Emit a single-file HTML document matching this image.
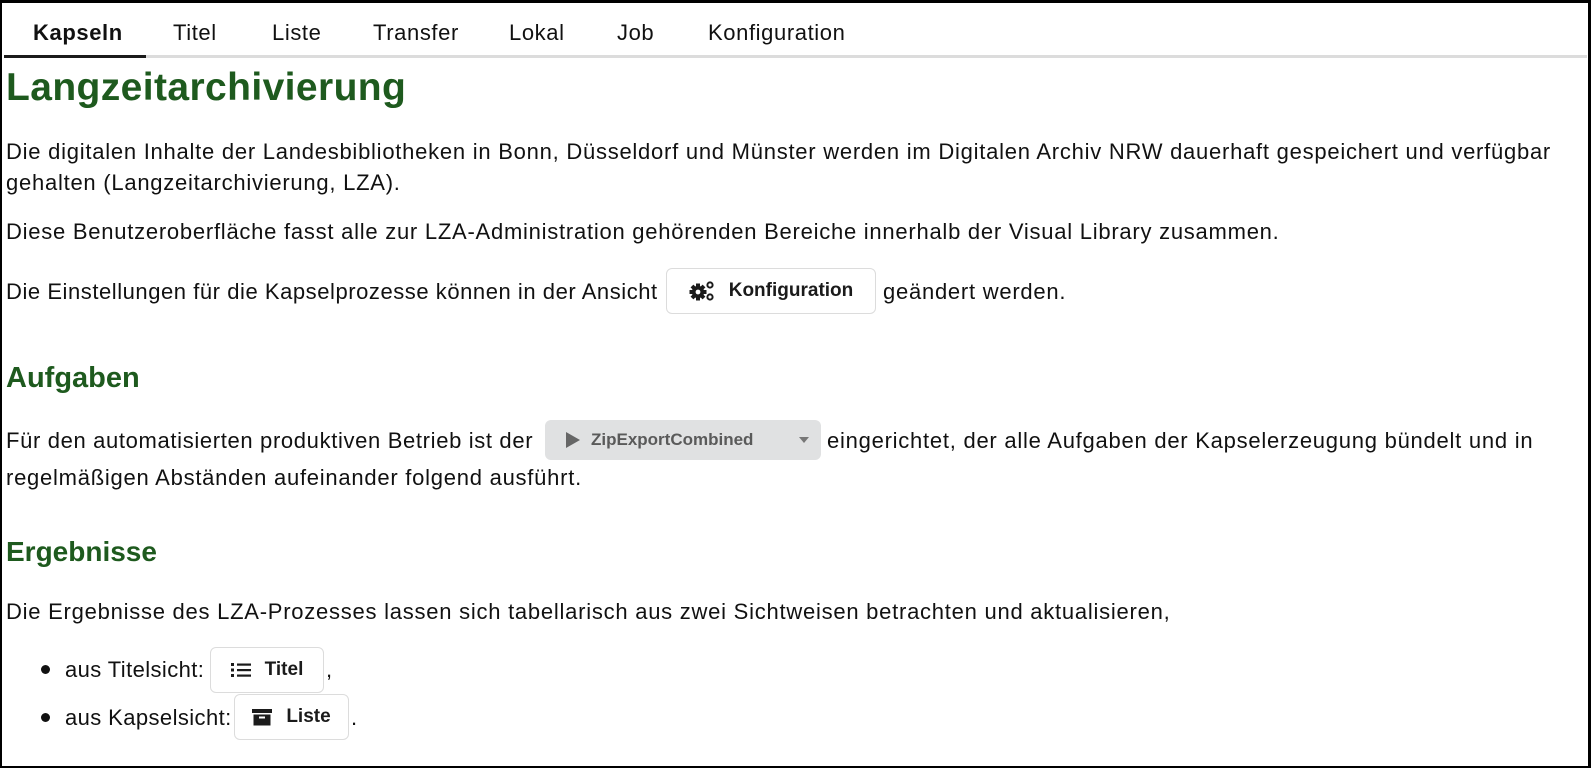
<!DOCTYPE html>
<html><head><meta charset="utf-8"><style>
*{margin:0;padding:0;box-sizing:border-box}
body{width:1591px;height:770px;overflow:hidden;background:#fff;font-family:"Liberation Sans",Arial,sans-serif;color:#111;position:relative}
.frame{position:absolute;left:0;top:0;width:1591px;height:768px;border:2px solid #000;border-top-width:3px;border-right-width:3px}
.a{position:absolute;white-space:nowrap}
.t{font-size:22px;line-height:24px;letter-spacing:0.75px}
.tab{position:absolute;top:20px;font-size:22px;letter-spacing:0.6px}
.ul{position:absolute;left:4px;top:55px;width:1583px;height:3px;background:#dcdcdc}
.ul2{position:absolute;left:4px;top:55px;width:142px;height:3px;background:#1b1b1b}
h1,h2{position:absolute;color:#1e5a1e;font-weight:bold;white-space:nowrap}
h1{font-size:39px;left:6px;top:66px;letter-spacing:0.4px}
h2{font-size:28px;left:6px}
.btn{position:absolute;border:1px solid #dcdcdc;border-radius:6px;background:#fff;font-weight:bold;font-size:19px;display:flex;align-items:center;justify-content:center;gap:14px;color:#1b1b1b}
.grey{background:#e0e1e2;border:none;color:#5a5a5a;justify-content:flex-start;padding-left:18px;gap:10px}
.dot{position:absolute;width:9px;height:9px;border-radius:50%;background:#111}
</style></head><body>
<div class="frame"></div>
<div class="tab" style="left:33px;font-weight:bold">Kapseln</div>
<div class="tab" style="left:173px">Titel</div>
<div class="tab" style="left:272px">Liste</div>
<div class="tab" style="left:373px">Transfer</div>
<div class="tab" style="left:509px">Lokal</div>
<div class="tab" style="left:617px">Job</div>
<div class="tab" style="left:708px">Konfiguration</div>
<div class="ul"></div><div class="ul2"></div>
<h1>Langzeitarchivierung</h1>
<div class="a t" style="left:6px;top:140px">Die digitalen Inhalte der Landesbibliotheken in Bonn, Düsseldorf und Münster werden im Digitalen Archiv NRW dauerhaft gespeichert und verfügbar</div>
<div class="a t" style="left:6px;top:171px">gehalten (Langzeitarchivierung, LZA).</div>
<div class="a t" style="left:6px;top:220px">Diese Benutzeroberfläche fasst alle zur LZA-Administration gehörenden Bereiche innerhalb der Visual Library zusammen.</div>
<div class="a t" style="left:6px;top:280px;letter-spacing:0.55px">Die Einstellungen für die Kapselprozesse können in der Ansicht</div>
<div class="btn" style="left:666px;top:268px;width:210px;height:46px"><svg width="26" height="22" viewBox="0 0 26 22">
<g transform="translate(9,12)" fill="#1b1b1b"><rect x="-2" y="-8.5" width="4" height="17"/><rect x="-2" y="-8.5" width="4" height="17" transform="rotate(45)"/><rect x="-2" y="-8.5" width="4" height="17" transform="rotate(90)"/><rect x="-2" y="-8.5" width="4" height="17" transform="rotate(135)"/><circle r="6.2"/><circle r="2.4" fill="#fff"/></g>
<circle cx="21" cy="5" r="2.6" fill="none" stroke="#1b1b1b" stroke-width="2"/><circle cx="21" cy="17" r="2.6" fill="none" stroke="#1b1b1b" stroke-width="2"/></svg>Konfiguration</div>
<div class="a t" style="left:883px;top:280px">geändert werden.</div>
<h2 style="top:362px;font-size:29px">Aufgaben</h2>
<div class="a t" style="left:6px;top:429px;letter-spacing:0.65px">Für den automatisierten produktiven Betrieb ist der</div>
<div class="btn grey" style="left:545px;top:420px;width:276px;height:40px;font-size:17px"><svg width="18" height="18" viewBox="0 0 18 18"><path d="M3 1 L17 9 L3 17Z" fill="#666"/></svg>ZipExportCombined<svg style="position:absolute;right:12px" width="10" height="6" viewBox="0 0 10 6"><path d="M0 0H10L5 6Z" fill="#777"/></svg></div>
<div class="a t" style="left:827px;top:429px">eingerichtet, der alle Aufgaben der Kapselerzeugung bündelt und in</div>
<div class="a t" style="left:6px;top:466px">regelmäßigen Abständen aufeinander folgend ausführt.</div>
<h2 style="top:536px">Ergebnisse</h2>
<div class="a t" style="left:6px;top:600px">Die Ergebnisse des LZA-Prozesses lassen sich tabellarisch aus zwei Sichtweisen betrachten und aktualisieren,</div>
<div class="dot" style="left:41px;top:665px"></div>
<div class="a t" style="left:65px;top:658px;letter-spacing:0.4px">aus Titelsicht:</div>
<div class="btn" style="left:210px;top:647px;width:114px;height:46px"><svg width="20" height="16" viewBox="0 0 20 16"><rect x="0" y="1" width="3" height="3" fill="#1b1b1b"/><rect x="0" y="6.5" width="3" height="3" fill="#1b1b1b"/><rect x="0" y="12" width="3" height="3" fill="#1b1b1b"/><rect x="6" y="1.5" width="14" height="2.2" fill="#1b1b1b"/><rect x="6" y="7" width="14" height="2.2" fill="#1b1b1b"/><rect x="6" y="12.5" width="14" height="2.2" fill="#1b1b1b"/></svg>Titel</div>
<div class="a t" style="left:326px;top:658px">,</div>
<div class="dot" style="left:41px;top:713px"></div>
<div class="a t" style="left:65px;top:706px;letter-spacing:0.4px">aus Kapselsicht:</div>
<div class="btn" style="left:234px;top:694px;width:115px;height:46px"><svg width="20" height="18" viewBox="0 0 20 18"><rect x="0" y="1" width="20" height="4" fill="#1b1b1b"/><rect x="1.5" y="6.5" width="17" height="11" fill="#1b1b1b"/><rect x="7" y="8.5" width="6" height="2" fill="#fff"/></svg>Liste</div>
<div class="a t" style="left:351px;top:706px">.</div>
</body></html>
